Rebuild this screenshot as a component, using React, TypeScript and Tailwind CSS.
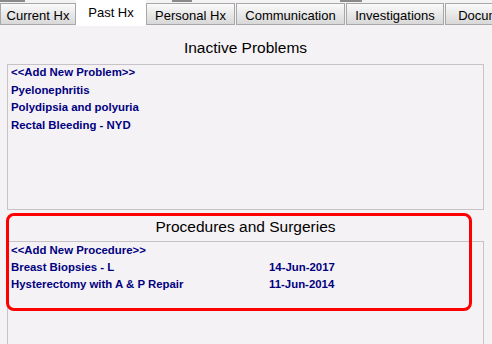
import React from "react";

const tabs = [
  { label: "Current Hx", w: 76, ml: 0, active: false },
  { label: "Past Hx", w: 70, ml: 0, active: true },
  { label: "Personal Hx", w: 89, ml: 0, active: false },
  { label: "Communication", w: 109, ml: 1, active: false },
  { label: "Investigations", w: 98, ml: 1, active: false },
  { label: "Documents", w: 92, ml: 1, active: false },
];

const problems = [
  "<<Add New Problem>>",
  "Pyelonephritis",
  "Polydipsia and polyuria",
  "Rectal Bleeding - NYD",
];

const procedures: { name: string; date: string }[] = [
  { name: "<<Add New Procedure>>", date: "" },
  { name: "Breast Biopsies - L", date: "14-Jun-2017" },
  { name: "Hysterectomy with A & P Repair", date: "11-Jun-2014" },
];

export default function App() {
  return (
    <div className="relative w-[492px] h-[344px] overflow-hidden bg-[#f5f2f5] font-['Liberation_Sans',Arial,sans-serif]">
      {/* top strip bits */}
      <div className="absolute left-0 top-0 w-[25px] h-[2px] bg-[#8a8a8a]" />
      <div className="absolute left-[172px] top-0 w-[20px] h-[2px] bg-[#8a8a8a]" />
      <div className="absolute left-[340px] top-0 w-[22px] h-[2px] bg-[#8a8a8a]" />

      {/* Tabs */}
      <div className="flex h-[26px] items-start overflow-hidden">
        {tabs.map((t) =>
          t.active ? (
            <div
              key={t.label}
              className="h-[26px] bg-white flex justify-center pt-[5px] text-[13px] leading-[15px] text-black shrink-0"
              style={{ width: t.w }}
            >
              {t.label}
            </div>
          ) : (
            <div
              key={t.label}
              className="mt-[3px] h-[22px] border border-[#a8a8a8] bg-gradient-to-b from-[#fafafa] to-[#d8d8d8] flex justify-center whitespace-nowrap pt-[4px] text-[13px] leading-[15px] text-black shrink-0"
              style={{ width: t.w, marginLeft: t.ml }}
            >
              {t.label}
            </div>
          )
        )}
      </div>

      <div className="pl-[7px] pr-[8px]">
        {/* Inactive Problems */}
        <div className="h-[38px] pt-[12px] text-center text-[15.5px] leading-[20px] text-black">
          Inactive Problems
        </div>
        <div className="h-[146px] border border-[#c6c2c6] pl-[3px] text-[11.4px] font-bold text-[#000080] leading-[17.6px]">
          <div className="-mt-[1px]">
            {problems.map((p) => (
              <div key={p}>{p}</div>
            ))}
          </div>
        </div>

        {/* Procedures */}
        <div className="h-[31px] pt-[7px] text-center text-[15.5px] leading-[20px] text-black">
          Procedures and Surgeries
        </div>
        <div className="h-[120px] border-l border-r border-t border-[#c6c2c6] pl-[3px] text-[11.4px] font-bold text-[#000080] leading-[17px]">
          {procedures.map((p) => (
            <div key={p.name} className="flex">
              <div className="w-[258px]">{p.name}</div>
              <div>{p.date}</div>
            </div>
          ))}
        </div>
      </div>

      {/* red highlight */}
      <div className="absolute left-[6px] top-[213px] w-[466px] h-[98px] border-[3px] border-[#ff0000] rounded-[8px]" />
    </div>
  );
}
